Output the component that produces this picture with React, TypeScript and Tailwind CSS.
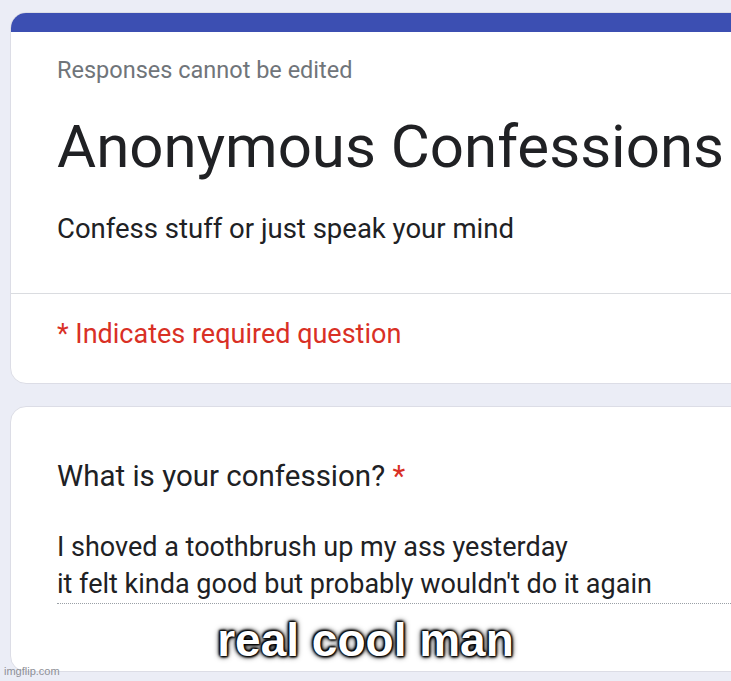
export default function App() {
  return (
    <div
      className="relative h-[681px] w-[731px] overflow-hidden bg-[#ebedf6] pl-[10px] pt-[12px]"
      style={{ fontFamily: "Roboto, 'Liberation Sans', sans-serif" }}
    >
      {/* Header card */}
      <div className="w-[800px] overflow-hidden rounded-[16px] border border-[#dcdde6] bg-white">
        <div className="h-[19px] bg-[#3c4fb2]" />
        <div className="px-[46px] pb-[47px]">
          <div className="mt-[24px] text-[23.5px] leading-[28px] text-[#70757a]">
            Responses cannot be edited
          </div>
          <h1 className="mt-[28px] text-[60px] leading-[70px] text-[#202124]">
            Anonymous Confessions
          </h1>
          <p className="mt-[30px] text-[27.5px] leading-[34px] text-[#202124]">
            Confess stuff or just speak your mind
          </p>
        </div>
        <div className="border-t border-[#dadce0] px-[46px] pb-[33px] pt-[24px]">
          <p className="text-[27px] leading-[32px] text-[#d93025]">
            * Indicates required question
          </p>
        </div>
      </div>

      {/* Question card */}
      <div className="mt-[22px] w-[800px] rounded-[16px] border border-[#dcdde6] bg-white pb-[67px] pl-[46px] pt-[52px]">
        <p className="text-[29.5px] leading-[34px] text-[#202124]">
          What is your confession? <span className="text-[#d93025]">*</span>
        </p>
        <div className="mt-[36px] border-b border-dotted border-[#9aa0a6] text-[27px] leading-[37px] text-[#202124]">
          <div>I shoved a toothbrush up my ass yesterday</div>
          <div>it felt kinda good but probably wouldn't do it again</div>
        </div>
      </div>

      {/* Meme caption */}
      <div
        className="absolute left-0 right-0 top-[612px] text-center text-[46px] font-bold leading-[56px] text-white"
        style={{
          fontFamily: "'Liberation Sans', Arial, sans-serif",
          textShadow:
            "0 0 2px #000, 0 0 3px #000, 0 0 4px #000, 0 0 6px #000, 1px 1px 2px #000, -1px -1px 2px #000",
        }}
      >
        real cool man
      </div>

      <div
        className="absolute bottom-[4px] left-[4px] text-[11px] leading-[12px] text-[#8e9097]"
        style={{ fontFamily: "'Liberation Sans Narrow', 'Liberation Sans', sans-serif" }}
      >
        imgflip.com
      </div>
    </div>
  );
}
